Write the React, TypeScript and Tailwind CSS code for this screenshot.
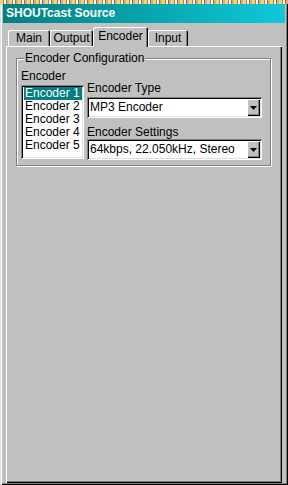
const raised =
  "shadow-[inset_1px_1px_#ffffff,inset_-1px_-1px_#000000,inset_-2px_-2px_#808080]";
const sunken =
  "shadow-[inset_1px_1px_#808080,inset_-1px_-1px_#ffffff,inset_2px_2px_#000000,inset_-2px_-2px_#dfdfdf]";

type TabProps = { label: string; width: string; active?: boolean };

function Tab({ label, width, active = false }: TabProps) {
  return (
    <div
      className={
        active
          ? `${width} h-[20px] -mb-[1px] z-10 relative bg-[#c0c0c0] rounded-tl-[2px] rounded-tr-[2px] shadow-[inset_1px_1px_#ffffff,inset_-1px_0_#000000,inset_-2px_0_#808080] flex justify-center pt-[2px] leading-[14px]`
          : `${width} h-[16px] bg-[#c0c0c0] rounded-tl-[2px] rounded-tr-[2px] shadow-[inset_1px_1px_#ffffff,inset_-1px_0_#000000,inset_-2px_0_#808080] flex justify-center pt-[1px] leading-[14px]`
      }
    >
      {label}
    </div>
  );
}

function Combo({ value }: { value: string }) {
  return (
    <div className={`h-[21px] w-[175px] bg-white ${sunken} flex items-stretch p-[2px]`}>
      <div className="flex-1 pl-[1px] leading-[17px] whitespace-nowrap overflow-hidden">{value}</div>
      <div className={`w-[13px] bg-[#c0c0c0] ${raised} flex items-center justify-center`}>
        <svg width="7" height="4" viewBox="0 0 7 4">
          <path d="M0 0h7L3.5 4z" fill="#000" />
        </svg>
      </div>
    </div>
  );
}

export default function App() {
  const encoders = ["Encoder 1", "Encoder 2", "Encoder 3", "Encoder 4", "Encoder 5"];
  return (
    <div className="w-[288px] h-[485px] flex flex-col bg-[#c0c0c0] font-['Liberation_Sans',Arial,sans-serif] text-[12px] text-black overflow-hidden">
      <div className="h-[4px] shrink-0 bg-[repeating-linear-gradient(90deg,#f2d478_0px,#f2d478_3px,#c47c2c_3px,#c47c2c_4px,#ffffff_4px,#ffffff_6px,#5078c8_6px,#5078c8_7px,#e8b050_7px,#e8b050_9px)]" />
      <div className="flex-1 flex flex-col px-[3px] pb-[3px] shadow-[inset_1px_0_#dfdfdf,inset_2px_0_#ffffff,inset_-1px_-1px_#000000,inset_-2px_-2px_#808080]">
        <div className="h-[19px] shrink-0 bg-[linear-gradient(90deg,#008080,#10c8d8)] text-white font-bold text-[12px] leading-[19px] pl-[3px]">
          SHOUTcast Source
        </div>
        <div className="h-[23px] shrink-0 flex items-end pl-[5px]">
          <Tab label="Main" width="w-[42px]" />
          <Tab label="Output" width="w-[43px]" />
          <Tab label="Encoder" width="w-[55px]" active />
          <Tab label="Input" width="w-[40px]" />
        </div>
        <div className={`flex-1 mx-[3px] mb-[-1px] bg-[#c0c0c0] ${raised} pt-[12px] pl-[10px] pr-[11px]`}>
          <div className="relative h-[108px] border border-[#808080] shadow-[1px_1px_#ffffff,inset_1px_1px_#ffffff] pt-[10px] pl-[4px] flex gap-[3px]">
            <span className="absolute -top-[8px] left-[7px] px-[1px] bg-[#c0c0c0] leading-[14px]">
              Encoder Configuration
            </span>
            <div className="flex flex-col">
              <div className="leading-[14px] h-[16px]">Encoder</div>
              <div className={`w-[63px] h-[74px] bg-white ${sunken} p-[2px] pl-[3px]`}>
                {encoders.map((e, i) => (
                  <div
                    key={e}
                    className={
                      i === 0
                        ? "h-[13px] leading-[13px] pl-[1px] bg-[#008080] text-white"
                        : "h-[13px] leading-[13px] pl-[1px]"
                    }
                  >
                    {e}
                  </div>
                ))}
              </div>
            </div>
            <div className="flex flex-col pt-[12px]">
              <div className="leading-[14px] h-[16px]">Encoder Type</div>
              <Combo value="MP3 Encoder" />
              <div className="leading-[14px] h-[21px] pt-[7px]">Encoder Settings</div>
              <Combo value="64kbps, 22.050kHz, Stereo" />
            </div>
          </div>
        </div>
      </div>
    </div>
  );
}
